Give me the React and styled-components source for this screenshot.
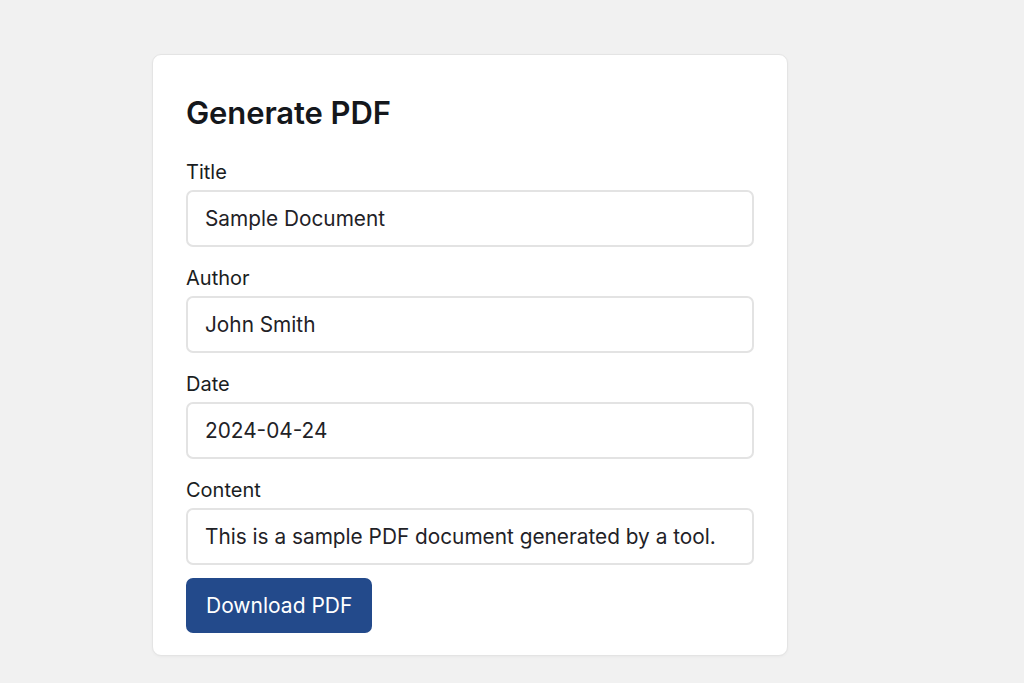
import React from 'react';
import styled, { createGlobalStyle } from 'styled-components';

const GlobalStyle = createGlobalStyle`
  html, body {
    margin: 0;
    padding: 0;
    background: #f1f1f1;
    font-family: 'Inter', 'Liberation Sans', sans-serif;
  }
`;

const Page = styled.div`
  min-height: 683px;
  padding: 54px 0 0 152px;
  box-sizing: border-box;
`;

const Card = styled.form`
  display: flex;
  flex-direction: column;
  width: 636px;
  box-sizing: border-box;
  padding: 38px 33px 22px 33px;
  background: #ffffff;
  border: 1px solid #e4e4e4;
  border-radius: 9px;
  box-shadow: 0 1px 3px rgba(0, 0, 0, 0.04);
`;

const Heading = styled.h1`
  margin: 0 0 27px 0;
  font-size: 31px;
  line-height: 40px;
  font-weight: 600;
  color: #14171c;
  letter-spacing: -0.1px;
`;

const Field = styled.div`
  display: flex;
  flex-direction: column;
  gap: 6px;
  margin-bottom: ${props => (props.$last ? '13px' : '19px')};
`;

const Label = styled.label`
  font-size: 20px;
  line-height: 24px;
  color: #1a1d22;
`;

const Input = styled.input`
  height: 57px;
  box-sizing: border-box;
  padding: 0 17px;
  border: 2px solid #e3e3e3;
  border-radius: 7px;
  background: #fff;
  font-family: inherit;
  font-size: 20.8px;
  color: #1f2227;
  outline: none;
`;

const Button = styled.button`
  align-self: flex-start;
  height: 55px;
  padding: 0 20px;
  border: none;
  border-radius: 7px;
  background: #234a8b;
  color: #ffffff;
  font-family: inherit;
  font-size: 21px;
  cursor: pointer;
`;

const fields = [
  { id: 'title', label: 'Title', value: 'Sample Document' },
  { id: 'author', label: 'Author', value: 'John Smith' },
  { id: 'date', label: 'Date', value: '2024-04-24' },
  { id: 'content', label: 'Content', value: 'This is a sample PDF document generated by a tool.' },
];

export default function App() {
  return (
    <>
      <GlobalStyle />
      <Page>
        <Card onSubmit={e => e.preventDefault()}>
          <Heading>Generate PDF</Heading>
          {fields.map((f, i) => (
            <Field key={f.id} $last={i === fields.length - 1}>
              <Label htmlFor={f.id}>{f.label}</Label>
              <Input id={f.id} defaultValue={f.value} />
            </Field>
          ))}
          <Button type="submit">Download PDF</Button>
        </Card>
      </Page>
    </>
  );
}
